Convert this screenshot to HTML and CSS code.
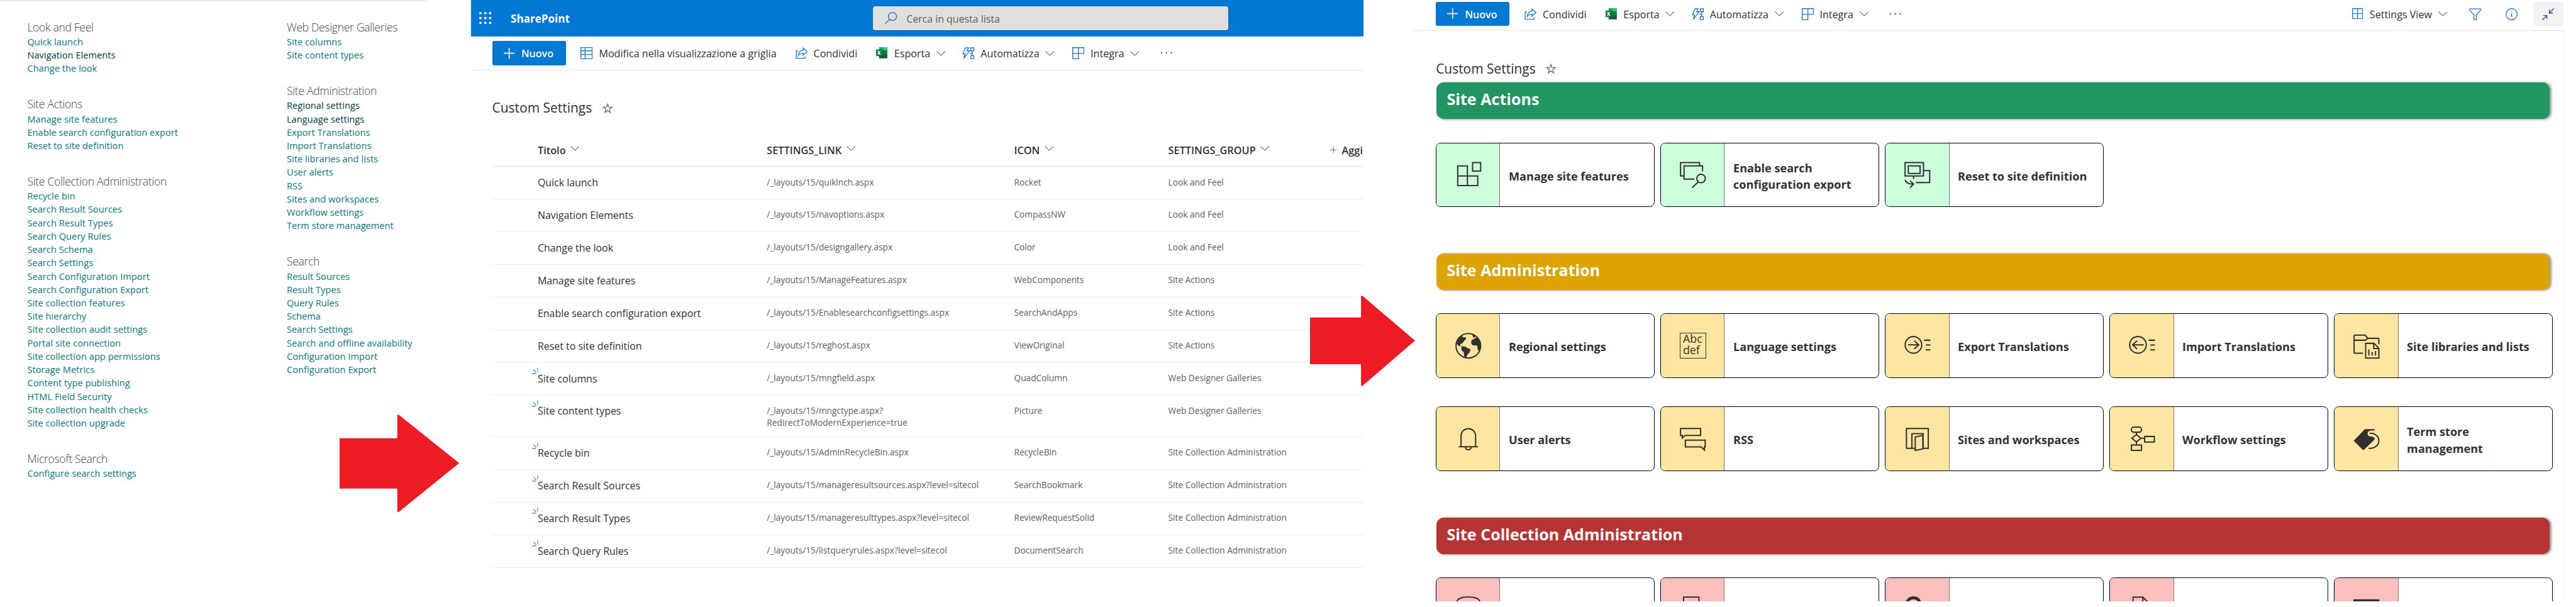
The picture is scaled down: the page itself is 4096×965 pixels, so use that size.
FILE: index.html
```html
<!DOCTYPE html>
<html lang="en">
<head>
<meta charset="utf-8">
<title>Custom Settings</title>
<link rel="stylesheet" href="styles.css">
</head>
<body>
<svg class="defs" width="0" height="0">
  <symbol id="chev" viewBox="0 0 15 8"><path d="M.5.7 7.5 7.3 14.5.7"/></symbol>
  <symbol id="plus" viewBox="0 0 18 18"><path d="M9 0v18M0 9h18"/></symbol>
  <symbol id="star" viewBox="0 0 17 17"><path d="M8.500 1.400 10.200 6.500 15.800 6.500 11.300 9.800 13 15.500 8.500 12.100 4 15.500 5.700 9.800 1.200 6.500 6.800 6.500Z"/></symbol>
  <symbol id="grid" viewBox="0 0 20 20"><path d="M.7.7h18.600v18.600H.7zM.7 6h18.600M.7 12h18.600M7.500.7v18.600"/></symbol>
  <symbol id="share" viewBox="0 0 20 20"><path d="M4 6H1.200v12.300h14.500V15M12.500 1.500v3.600C7.600 5.300 5 8.600 4.600 13.600 6.500 10.900 9 9.700 12.500 9.700v3.500L19 7.300z"/></symbol>
  <symbol id="auto" viewBox="0 0 20 20"><path d="M5.500 1h5L8 6h4L2.500 18.500 4.600 11H1.200zM14 1h5v5h-5zM14 14h5v5h-5zM16.500 6v8M12 10h4.500"/></symbol>
  <symbol id="integ" viewBox="0 0 20 20"><path d="M.8.8h18.400v9.400H.8zM.8 10.200v9H10V.8"/></symbol>
  <symbol id="tiles" viewBox="0 0 18 18"><path d="M.8.8h16.400v16.400H.8zM9 .8v16.400M.8 9h16.400"/></symbol>
  <symbol id="funnel" viewBox="0 0 20 20"><path d="M1 1.200h18v2L12 10.800v8H8v-8L1 3.200z"/></symbol>
  <symbol id="info" viewBox="0 0 20 20"><circle cx="10" cy="10" r="9.200"/><path d="M10 8.300v6.400M10 5.200v1.400"/></symbol>
  <symbol id="shrink" viewBox="0 0 20 20"><path d="M19.500.5 12 8M12 2v6h6M.5 19.500 8 12M2 12h6v6"/></symbol>
  <symbol id="new" viewBox="0 0 10 10"><path d="M0 9.200h6.500M2.500 3 7 7.500M9.300 0v6.500"/></symbol>
</svg>
<main class="board">

<section class="classic">
  <div class="col">
    <div class="group"><h3>Look and Feel</h3><a>Quick launch</a><a class="visited">Navigation Elements</a><a>Change the look</a></div>
    <div class="group"><h3>Site Actions</h3><a>Manage site features</a><a>Enable search configuration export</a><a>Reset to site definition</a></div>
    <div class="group"><h3>Site Collection Administration</h3><a>Recycle bin</a><a>Search Result Sources</a><a>Search Result Types</a><a>Search Query Rules</a><a>Search Schema</a><a>Search Settings</a><a>Search Configuration Import</a><a>Search Configuration Export</a><a>Site collection features</a><a>Site hierarchy</a><a>Site collection audit settings</a><a>Portal site connection</a><a>Site collection app permissions</a><a>Storage Metrics</a><a>Content type publishing</a><a>HTML Field Security</a><a>Site collection health checks</a><a>Site collection upgrade</a></div>
    <div class="group"><h3>Microsoft Search</h3><a>Configure search settings</a></div>
  </div>
  <div class="col">
    <div class="group"><h3>Web Designer Galleries</h3><a>Site columns</a><a>Site content types</a></div>
    <div class="group"><h3>Site Administration</h3><a class="visited">Regional settings</a><a class="visited">Language settings</a><a>Export Translations</a><a>Import Translations</a><a>Site libraries and lists</a><a>User alerts</a><a>RSS</a><a>Sites and workspaces</a><a>Workflow settings</a><a>Term store management</a></div>
    <div class="group"><h3>Search</h3><a>Result Sources</a><a>Result Types</a><a>Query Rules</a><a>Schema</a><a>Search Settings</a><a>Search and offline availability</a><a>Configuration Import</a><a>Configuration Export</a></div>
  </div>
</section>

<section class="list">
  <header class="suite">
    <svg class="waffle" viewBox="0 0 20 20"><path d="M2 2h.01M10 2h.01M18 2h.01M2 10h.01M10 10h.01M18 10h.01M2 18h.01M10 18h.01M18 18h.01"/></svg>
    <span class="brand">SharePoint</span>
    <div class="search"><svg viewBox="0 0 20 20"><circle cx="12.500" cy="7.500" r="6.700"/><path d="M7.700 12.300.5 19.500"/></svg><span>Cerca in questa lista</span></div>
  </header>
  <div class="commands">
    <div class="primary"><svg><use href="#plus"/></svg><span>Nuovo</span></div>
    <div class="cmd w-grid"><svg class="ic"><use href="#grid"/></svg><span>Modifica nella visualizzazione a griglia</span></div>
    <div class="cmd w-share"><svg class="ic"><use href="#share"/></svg><span>Condividi</span></div>
    <div class="cmd w-export"><svg class="xl" viewBox="0 0 19 19"><path fill="#21a366" d="M5 0h14v6H5z"/><path fill="#107c41" d="M5 5h14v8H5z"/><path fill="#33c481" d="M12 0h7v5h-7z"/><path fill="#185c37" d="M5 12h14v7H5z"/><path fill="#0f7a40" d="M0 4h10v11H0z"/><path stroke="#fff" stroke-width="1.600" d="m3 6.500 4 6M7 6.500l-4 6"/></svg><span>Esporta</span><svg class="chev"><use href="#chev"/></svg></div>
    <div class="cmd w-auto"><svg class="ic"><use href="#auto"/></svg><span>Automatizza</span><svg class="chev"><use href="#chev"/></svg></div>
    <div class="cmd w-integ"><svg class="ic"><use href="#integ"/></svg><span>Integra</span><svg class="chev"><use href="#chev"/></svg></div>
    <svg class="dots" viewBox="0 0 20 4"><path d="M2 2h.01M10 2h.01M18 2h.01"/></svg>
  </div>
  <div class="title"><h1>Custom Settings</h1><svg><use href="#star"/></svg></div>
  <div class="table">
    <div class="row head"><span>Titolo<svg class="chev"><use href="#chev"/></svg></span><span>SETTINGS_LINK<svg class="chev"><use href="#chev"/></svg></span><span>ICON<svg class="chev"><use href="#chev"/></svg></span><span>SETTINGS_GROUP<svg class="chev"><use href="#chev"/></svg></span><span class="add"><svg class="addplus"><use href="#plus"/></svg>Aggi</span></div>
    <div class="row"><b>Quick launch</b><i>/_layouts/15/quiklnch.aspx</i><i>Rocket</i><i>Look and Feel</i></div>
    <div class="row"><b>Navigation Elements</b><i>/_layouts/15/navoptions.aspx</i><i>CompassNW</i><i>Look and Feel</i></div>
    <div class="row"><b>Change the look</b><i>/_layouts/15/designgallery.aspx</i><i>Color</i><i>Look and Feel</i></div>
    <div class="row"><b>Manage site features</b><i>/_layouts/15/ManageFeatures.aspx</i><i>WebComponents</i><i>Site Actions</i></div>
    <div class="row"><b>Enable search configuration export</b><i>/_layouts/15/Enablesearchconfigsettings.aspx</i><i>SearchAndApps</i><i>Site Actions</i></div>
    <div class="row"><b>Reset to site definition</b><i>/_layouts/15/reghost.aspx</i><i>ViewOriginal</i><i>Site Actions</i></div>
    <div class="row"><b><svg class="new"><use href="#new"/></svg>Site columns</b><i>/_layouts/15/mngfield.aspx</i><i>QuadColumn</i><i>Web Designer Galleries</i></div>
    <div class="row tall"><b><svg class="new"><use href="#new"/></svg>Site content types</b><i>/_layouts/15/mngctype.aspx?<br>RedirectToModernExperience=true</i><i>Picture</i><i>Web Designer Galleries</i></div>
    <div class="row"><b><svg class="new"><use href="#new"/></svg>Recycle bin</b><i>/_layouts/15/AdminRecycleBin.aspx</i><i>RecycleBin</i><i>Site Collection Administration</i></div>
    <div class="row"><b><svg class="new"><use href="#new"/></svg>Search Result Sources</b><i>/_layouts/15/manageresultsources.aspx?level=sitecol</i><i>SearchBookmark</i><i>Site Collection Administration</i></div>
    <div class="row"><b><svg class="new"><use href="#new"/></svg>Search Result Types</b><i>/_layouts/15/manageresulttypes.aspx?level=sitecol</i><i>ReviewRequestSolid</i><i>Site Collection Administration</i></div>
    <div class="row"><b><svg class="new"><use href="#new"/></svg>Search Query Rules</b><i>/_layouts/15/listqueryrules.aspx?level=sitecol</i><i>DocumentSearch</i><i>Site Collection Administration</i></div>
  </div>
</section>

<section class="gallery">
  <div class="commands">
    <div class="primary"><svg><use href="#plus"/></svg><span>Nuovo</span></div>
    <div class="cmd w-share"><svg class="ic"><use href="#share"/></svg><span>Condividi</span></div>
    <div class="cmd w-export"><svg class="xl" viewBox="0 0 19 19"><path fill="#21a366" d="M5 0h14v6H5z"/><path fill="#107c41" d="M5 5h14v8H5z"/><path fill="#33c481" d="M12 0h7v5h-7z"/><path fill="#185c37" d="M5 12h14v7H5z"/><path fill="#0f7a40" d="M0 4h10v11H0z"/><path stroke="#fff" stroke-width="1.600" d="m3 6.500 4 6M7 6.500l-4 6"/></svg><span>Esporta</span><svg class="chev"><use href="#chev"/></svg></div>
    <div class="cmd w-auto"><svg class="ic"><use href="#auto"/></svg><span>Automatizza</span><svg class="chev"><use href="#chev"/></svg></div>
    <div class="cmd w-integ"><svg class="ic"><use href="#integ"/></svg><span>Integra</span><svg class="chev"><use href="#chev"/></svg></div>
    <svg class="dots" viewBox="0 0 20 4"><path d="M2 2h.01M10 2h.01M18 2h.01"/></svg>
    <div class="cmd view"><svg class="ic small"><use href="#tiles"/></svg><span>Settings View</span><svg class="chev"><use href="#chev"/></svg></div>
    <svg class="ic tool"><use href="#funnel"/></svg>
    <svg class="ic tool"><use href="#info"/></svg>
    <div class="collapse"><svg class="ic"><use href="#shrink"/></svg></div>
  </div>
  <div class="title"><h1>Custom Settings</h1><svg><use href="#star"/></svg></div>

  <h2 class="banner green">Site Actions</h2>
  <div class="cards green">
    <div class="card"><div class="pic"><svg viewBox="0 0 43 43"><path d="M4 7h16v32.500H4zM4 23.500h33v16H20M28.500 1.500h13.300v14H28.500z"/></svg></div><p>Manage site features</p></div>
    <div class="card"><div class="pic"><svg viewBox="0 0 43 43"><path d="M6 23.500H1.200v-22h31.300V6.500M24 28.800H7V7h30.500v9M30.300 33.500 20.500 43"/><circle cx="35" cy="27.800" r="7"/></svg></div><p>Enable search<br>configuration export</p></div>
    <div class="card"><div class="pic"><svg viewBox="0 0 43 43"><path d="M1.200 1.500h30.300v22H1.200zM6.500 7h19.500v12.500H6.500zM32 14.700h9.800V34.500H19M15.300 24v4.500M1.300 30c1.200 4.500 5 7 13.500 7M9.500 31.500l5.800 5.500-5.800 5.700"/></svg></div><p>Reset to site definition</p></div>
  </div>

  <h2 class="banner gold">Site Administration</h2>
  <div class="cards gold">
    <div class="card"><div class="pic"><svg viewBox="0 0 43 43"><circle cx="21.500" cy="21.500" r="20.300"/><path class="solid" d="M2 17 4 11 9 6l3 0 2 2 3-1 1 3-3 3-3 4-4 2 1 3-3 0-3-3zM10 22l7 1 4 3 4 1-1 5-4 4-2 5-3-1-1-7-4-5zM31 10l5-3 5 8 1 8-3 7-2-2-1-7-7 0-3-4 1-5zM27 2l6 3-1 3-2 0z"/></svg></div><p>Regional settings</p></div>
    <div class="card"><div class="pic"><div class="abc"><span>Abc</span><span>def</span></div></div><p>Language settings</p></div>
    <div class="card"><div class="pic"><svg viewBox="0 0 43 43"><circle cx="15" cy="20" r="13.700"/><path d="M6 20h18M16.300 13l7.500 7-7.500 7M32.500 12.300H43M35.500 20.300H43M35.500 28.200H43"/></svg></div><p>Export Translations</p></div>
    <div class="card"><div class="pic"><svg viewBox="0 0 43 43"><circle cx="15" cy="20" r="13.700"/><path d="M24.500 20h-18M13.700 13l-7.500 7 7.500 7M32.500 12.300H43M35.500 20.300H43M35.500 28.200H43"/></svg></div><p>Import Translations</p></div>
    <div class="card"><div class="pic"><svg viewBox="0 0 43 43"><path d="M16 33.800H2.200l-1-1V5l1-1H19.500l4.200 5.200H41l1 1V19M1.200 12.300H20l3.700-3M20.300 17.500H34l8 8v16.200H20.300zM33.500 17.500v8.300H42M25.500 27.500v10M31 32v5.500M36.500 30v7.500"/></svg></div><p>Site libraries and lists</p></div>
  </div>
  <div class="cards gold second">
    <div class="card"><div class="pic"><svg viewBox="0 0 43 43"><path d="M5.500 34.500h32M9.500 34.500V17c0-16.500 24-16.500 24 0v17.500M17 35.500c0 5 9 5 9 0"/></svg></div><p>User alerts</p></div>
    <div class="card"><div class="pic"><svg viewBox="0 0 43 43"><path d="M1.200 4.500h33v11.300H8.500L4 20v-4.200H1.200zM9.200 23.500h32.600v11.300H40.500V40l-5.300-5.200h-26z"/></svg></div><p>RSS</p></div>
    <div class="card"><div class="pic"><svg viewBox="0 0 43 43"><path d="M17 37H12.500V13H31v24h8.500V4.500h-36V37h9M18 18.500 30.500 15.500V38L18 40.500z"/></svg></div><p>Sites and workspaces</p></div>
    <div class="card"><div class="pic"><svg viewBox="0 0 43 43"><rect x="4" y="2" width="17" height="8.500" rx="4.200"/><path d="M12.500 10.500v4l-7.500 6 7.500 6 7.500-6-7.500-6M12.500 26.500v5M20 20.500h6M26 17.500h16v9.300H26zM4.300 31.500h16.500v9H4.300z"/></svg></div><p>Workflow settings</p></div>
    <div class="card"><div class="pic"><svg viewBox="0 0 43 43"><path class="solid" d="M.5 24.500 19 5.500H35v2.200H28.500c-4.500.8-6 4.300-4.500 7.300 1.500 2.500 4 3 6.500 2.300l4.500 2.500v2.700L16.500 40.300z"/><path d="M26.500 12.500C35 11 42 17 42 24.500S34.500 38.500 25 36.700"/></svg></div><p>Term store<br>management</p></div>
  </div>

  <h2 class="banner red">Site Collection Administration</h2>
  <div class="cards red">
    <div class="card"><div class="pic"><svg viewBox="0 0 43 43"><path d="M3 7.500C7-1 36-1 40 7.500V43H3z"/></svg></div></div>
    <div class="card"><div class="pic"><svg viewBox="0 0 43 43"><path d="M6.200 43V1.200h25.300V43"/></svg></div></div>
    <div class="card"><div class="pic"><svg viewBox="0 0 43 43"><path class="thick" d="M4 14C4-1.500 26-1.500 26 14"/></svg></div></div>
    <div class="card"><div class="pic"><svg viewBox="0 0 43 43"><path d="M7 43V1.200h16L33 11v32M23 1.200V11h10"/></svg></div></div>
    <div class="card"><div class="pic"><svg viewBox="0 0 43 43"><path class="solid" d="M0 5h43v30H0z"/></svg></div></div>
  </div>
</section>

<svg class="arrow first" viewBox="0 0 197 161"><path d="M0 39H95V1l2-1L197 80 97 161l-2-1V122H0z"/></svg>
<svg class="arrow next" viewBox="0 0 173 149"><path d="M0 36H84V1l2-1 87 74-87 75-2-1V113H0z"/></svg>
</main>
</body>
</html>
```
FILE: styles.css
```css
* { box-sizing: border-box; }
html, body { margin: 0; background: #fff; overflow: hidden; }
body { width: 4096px; height: 965px; font-family: "Open Sans", "Noto Sans", sans-serif; color: #323130; }
h1, h2, h3, p { margin: 0; font-weight: 400; }
svg { display: block; flex: none; fill: none; overflow: visible; }
.defs { position: absolute; }

.board { zoom: 0.965; position: relative; width: 4244px; height: 1000px; display: flex; align-items: flex-start; overflow: hidden; }

/* classic settings page */
.classic { width: 776px; height: 1000px; padding: 31px 0 0 45px; display: flex; position: relative; background: linear-gradient(#e9e9e9, #e9e9e9) 0 0 / 703px 2px no-repeat; }
.classic .col { width: 427.500px; flex: none; }
.group { padding-bottom: 34px; }
.group h3 { font-size: 18.200px; line-height: 27px; letter-spacing: -.33px; font-weight: 300; color: #444; white-space: nowrap; }
.group a { display: block; font-size: 15.100px; letter-spacing: .06px; line-height: 22px; color: #03787c; white-space: nowrap; }
.group a.visited { color: #01393f; }

/* list page */
.list { width: 1471px; flex: none; height: 1000px; overflow: hidden; }
.suite { height: 60px; background: #0078d4; display: flex; align-items: center; padding-left: 14px; }
.waffle { width: 20px; height: 20px; stroke: #fff; stroke-width: 4px; stroke-linecap: round; }
.brand { width: 597px; margin-left: 31.500px; padding-top: 2px; font-size: 17.700px; font-weight: 700; color: #fff; }
.search { width: 585px; height: 40px; background: #e1dfdd; border-radius: 4px; box-shadow: 0 1px 3px rgba(0,0,0,.2); display: flex; align-items: center; padding-left: 20px; font-size: 16.500px; color: #605e5c; }
.search span { padding-top: 2.500px; }
.search svg { width: 20px; height: 20px; margin-right: 15px; stroke: #2266c4; stroke-width: 1.300px; }
.commands { height: 56px; border-bottom: 1px solid #e5e5e5; display: flex; align-items: center; padding-left: 35px; font-size: 16.700px; }
.commands span { padding-top: 2px; }
.primary { width: 121.500px; height: 40px; margin-right: 24.500px; background: #0078d4; border-radius: 3px; color: #fff; display: flex; align-items: center; padding-left: 19px; font-weight: 600; }
.primary svg { width: 18px; height: 18px; margin-right: 11px; stroke: #fff; stroke-width: 1.700px; }
.cmd { display: flex; align-items: center; flex: none; white-space: nowrap; }
.ic { width: 20px; height: 20px; margin-right: 10px; stroke: #1f75cf; stroke-width: 1.400px; }
.xl { width: 18.500px; height: 18.500px; margin-right: 11px; }
.chev { width: 15px; height: 8px; margin-left: 10px; stroke: #605e5c; stroke-width: 1.100px; }
.w-grid { width: 353.500px; }
.w-share { width: 133.500px; }
.w-export { width: 142px; }
.w-auto { width: 181px; }
.w-integ { width: 145px; }
.dots { width: 20px; height: 4px; stroke: #605e5c; stroke-width: 2.600px; stroke-linecap: round; }
.title { display: flex; align-items: center; height: 28px; }
.title h1 { font-size: 21.700px; line-height: 28px; width: 181.500px; font-weight: 500; white-space: nowrap; }
.title svg { width: 17px; height: 17px; stroke: #605e5c; stroke-width: 1.200px; }
.list .title { margin: 48px 0 28px 35px; }
.table { margin-left: 35px; }
.row { display: grid; grid-template-columns: 377.500px 407.500px 254px 267px 1fr; height: 53.770px; border-bottom: 1px solid #ededed; padding-left: 75px; }
.row.tall { height: 69px; }
.row b { font-weight: 400; font-size: 16.500px; line-height: 22px; padding-top: 15.500px; white-space: nowrap; position: relative; }
.row i { font-style: normal; font-size: 14.200px; line-height: 20px; padding-top: 14.700px; color: #605e5c; white-space: nowrap; }
.row.head { height: 55px; align-items: center; border-bottom-color: #e3e3e3; font-size: 16.900px; font-weight: 600; }
.head span { display: flex; align-items: center; white-space: nowrap; padding-top: 1px; }
.head .chev { margin-left: 8px; margin-bottom: 6px; }
.addplus { width: 11px; height: 11px; margin-right: 8px; stroke: #605e5c; stroke-width: 1.600px; }
.new { position: absolute; left: -9px; top: 9px; width: 10px; height: 10px; stroke: #0078d4; stroke-width: 1.100px; }

/* gallery view */
.gallery { margin-left: 81px; width: 1898px; height: 991px; flex: none; overflow: hidden; background: linear-gradient(#eee, #eee) 100% 50px / 1px 100% no-repeat; }
.gallery .commands { height: 51px; padding: 3px 2px 7px 38px; border-bottom-color: #e5e5e5; }
.view { margin-left: auto; width: 192.500px; }
.ic.small { width: 18px; height: 18px; margin-right: 11px; }
.tool { margin-right: 40px; }
.tool + .tool { margin-right: 26px; }
.collapse { width: 50px; height: 40px; background: #f3f2f1; display: flex; align-items: center; padding-left: 15px; }
.collapse .ic { stroke: #1d5a96; }
.gallery .title { margin: 48px 0 9px 38px; }
.banner { width: 1834px; height: 60px; margin-left: 39px; padding-left: 17px; border-radius: 12px; color: #fff; font-size: 26px; font-weight: 700; line-height: 55px; box-shadow: 3px 1px 4px rgba(0,0,0,.4); }
.banner.green { background: #229562; }
.banner.gold { background: #dca302; }
.banner.red { background: #b73434; }
.cards { display: flex; gap: 10px; margin: 39px 0 77px 38px; height: 106px; }
.cards.gold { margin: 38px 0 47px 38px; height: 107px; }
.cards.second { margin: 0 0 77px 38px; height: 106px; }
.cards.red { margin: 38px 0 0 38px; height: 107px; }
.card { width: 360px; flex: none; border: 1px solid #000; border-radius: 8px; overflow: hidden; display: flex; align-items: center; }
.pic { width: 105px; height: 100%; flex: none; border-right: 1px solid #777; display: flex; align-items: center; padding-left: 31px; }
.green .pic { background: #ccffdb; }
.gold .pic { background: #ffe6a0; }
.red .pic { background: #ffbfbf; }
.pic svg { width: 43px; height: 43px; stroke: #323130; stroke-width: 2.100px; }
.pic .solid { fill: #323130; stroke: none; }
.pic .thick { stroke-width: 5px; }
.card p { padding: 4px 0 0 14px; font-size: 18.800px; line-height: 27px; font-weight: 700; white-space: nowrap; }
.abc { width: 43px; height: 43px; border: 2px solid #323130; padding-left: 4px; font-size: 18.500px; line-height: 18.500px; }
.abc span { display: block; }

/* arrows over the panels */
.arrow { position: absolute; fill: #ed1c24; }
.first { left: 559.500px; top: 683px; width: 197px; height: 161px; }
.next { left: 2159px; top: 487px; width: 173px; height: 149px; }
```
